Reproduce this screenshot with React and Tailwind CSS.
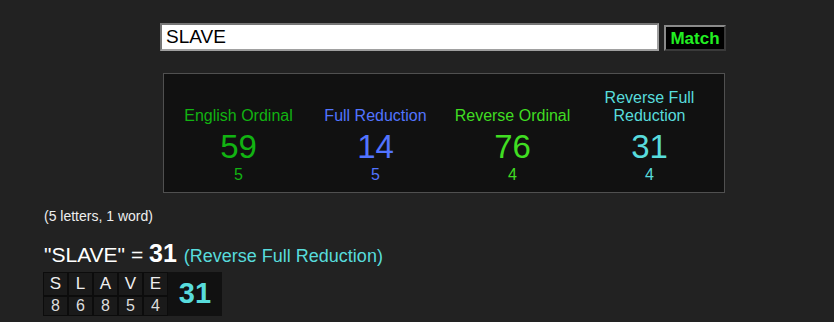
import React from 'react';

const ciphers = [
  { name: 'English Ordinal', value: 59, sub: 5, color: 'text-[#12b312]' },
  { name: 'Full Reduction', value: 14, sub: 5, color: 'text-[#5274ff]' },
  { name: 'Reverse Ordinal', value: 76, sub: 4, color: 'text-[#40dd22]' },
  { name: 'Reverse Full Reduction', value: 31, sub: 4, color: 'text-[#58dcdc]' },
];

const letters = [
  ['S', 8],
  ['L', 6],
  ['A', 8],
  ['V', 5],
  ['E', 4],
];

export default function App() {
  return (
    <div className="w-[834px] h-[322px] bg-[#222222] overflow-hidden font-['Liberation_Sans',Arial,sans-serif] text-white">
      {/* Search bar */}
      <div className="flex items-center pt-[23px] pl-[160px]">
        <input
          readOnly
          value="SLAVE"
          className="w-[499px] h-[28px] bg-white text-black text-[19px] pl-[4px] border-2 border-t-[#767676] border-l-[#767676] border-b-[#a0a0a0] border-r-[#a0a0a0] outline-none"
        />
        <button className="ml-[5px] mt-[2px] w-[62px] h-[26px] bg-black text-[#22ee22] font-bold text-[17px] leading-none border-2 border-t-[#8a8a8a] border-l-[#8a8a8a] border-b-[#3a3a3a] border-r-[#3a3a3a]">
          Match
        </button>
      </div>

      {/* Results box */}
      <div className="ml-[163px] mt-[22px] w-[562px] h-[120px] bg-[#111111] border border-[#505050] px-[6px] flex">
        {ciphers.map((c) => (
          <div key={c.name} className={`w-[137px] flex flex-col items-center ${c.color}`}>
            <div className="h-[51px] w-[120px] flex items-end justify-center text-center text-[16px] leading-[18px] pt-[14px]">
              {c.name}
            </div>
            <div className="text-[33px] leading-[38px] mt-[3px]">{c.value}</div>
            <div className="text-[16px] leading-[16px] mt-[1px]">{c.sub}</div>
          </div>
        ))}
      </div>

      <div className="ml-[44px] mt-[15px] text-[14px] leading-[16px] text-[#eeeeee]">(5 letters, 1 word)</div>

      <div className="ml-[44px] mt-[16px] flex items-baseline leading-[26px]">
        <span className="text-white text-[21px]">"SLAVE" =&nbsp;</span>
        <span className="font-bold text-[25px] text-white">31</span>
        <span className="ml-[7px] text-[18px] text-[#58dcdc]">(Reverse Full Reduction)</span>
      </div>

      {/* Letter table */}
      <div className="ml-[43px] mt-[3px] flex bg-[#111111] w-[179px] h-[44px]">
        <div className="flex">
          {letters.map(([l, n], i) => (
            <div key={i} className="flex flex-col w-[25px]">
              <div className="h-[24px] flex items-center justify-center text-[17px] text-[#eeeeee] bg-[#1a1a1a] border border-[#0c0c0c]">{l}</div>
              <div className="h-[20px] flex items-center justify-center text-[16px] text-[#dddddd] bg-[#1a1a1a] border border-[#0c0c0c]">{n}</div>
            </div>
          ))}
        </div>
        <div className="flex-1 flex items-center justify-center text-[29px] font-bold text-[#58dcdc]">31</div>
      </div>
    </div>
  );
}
